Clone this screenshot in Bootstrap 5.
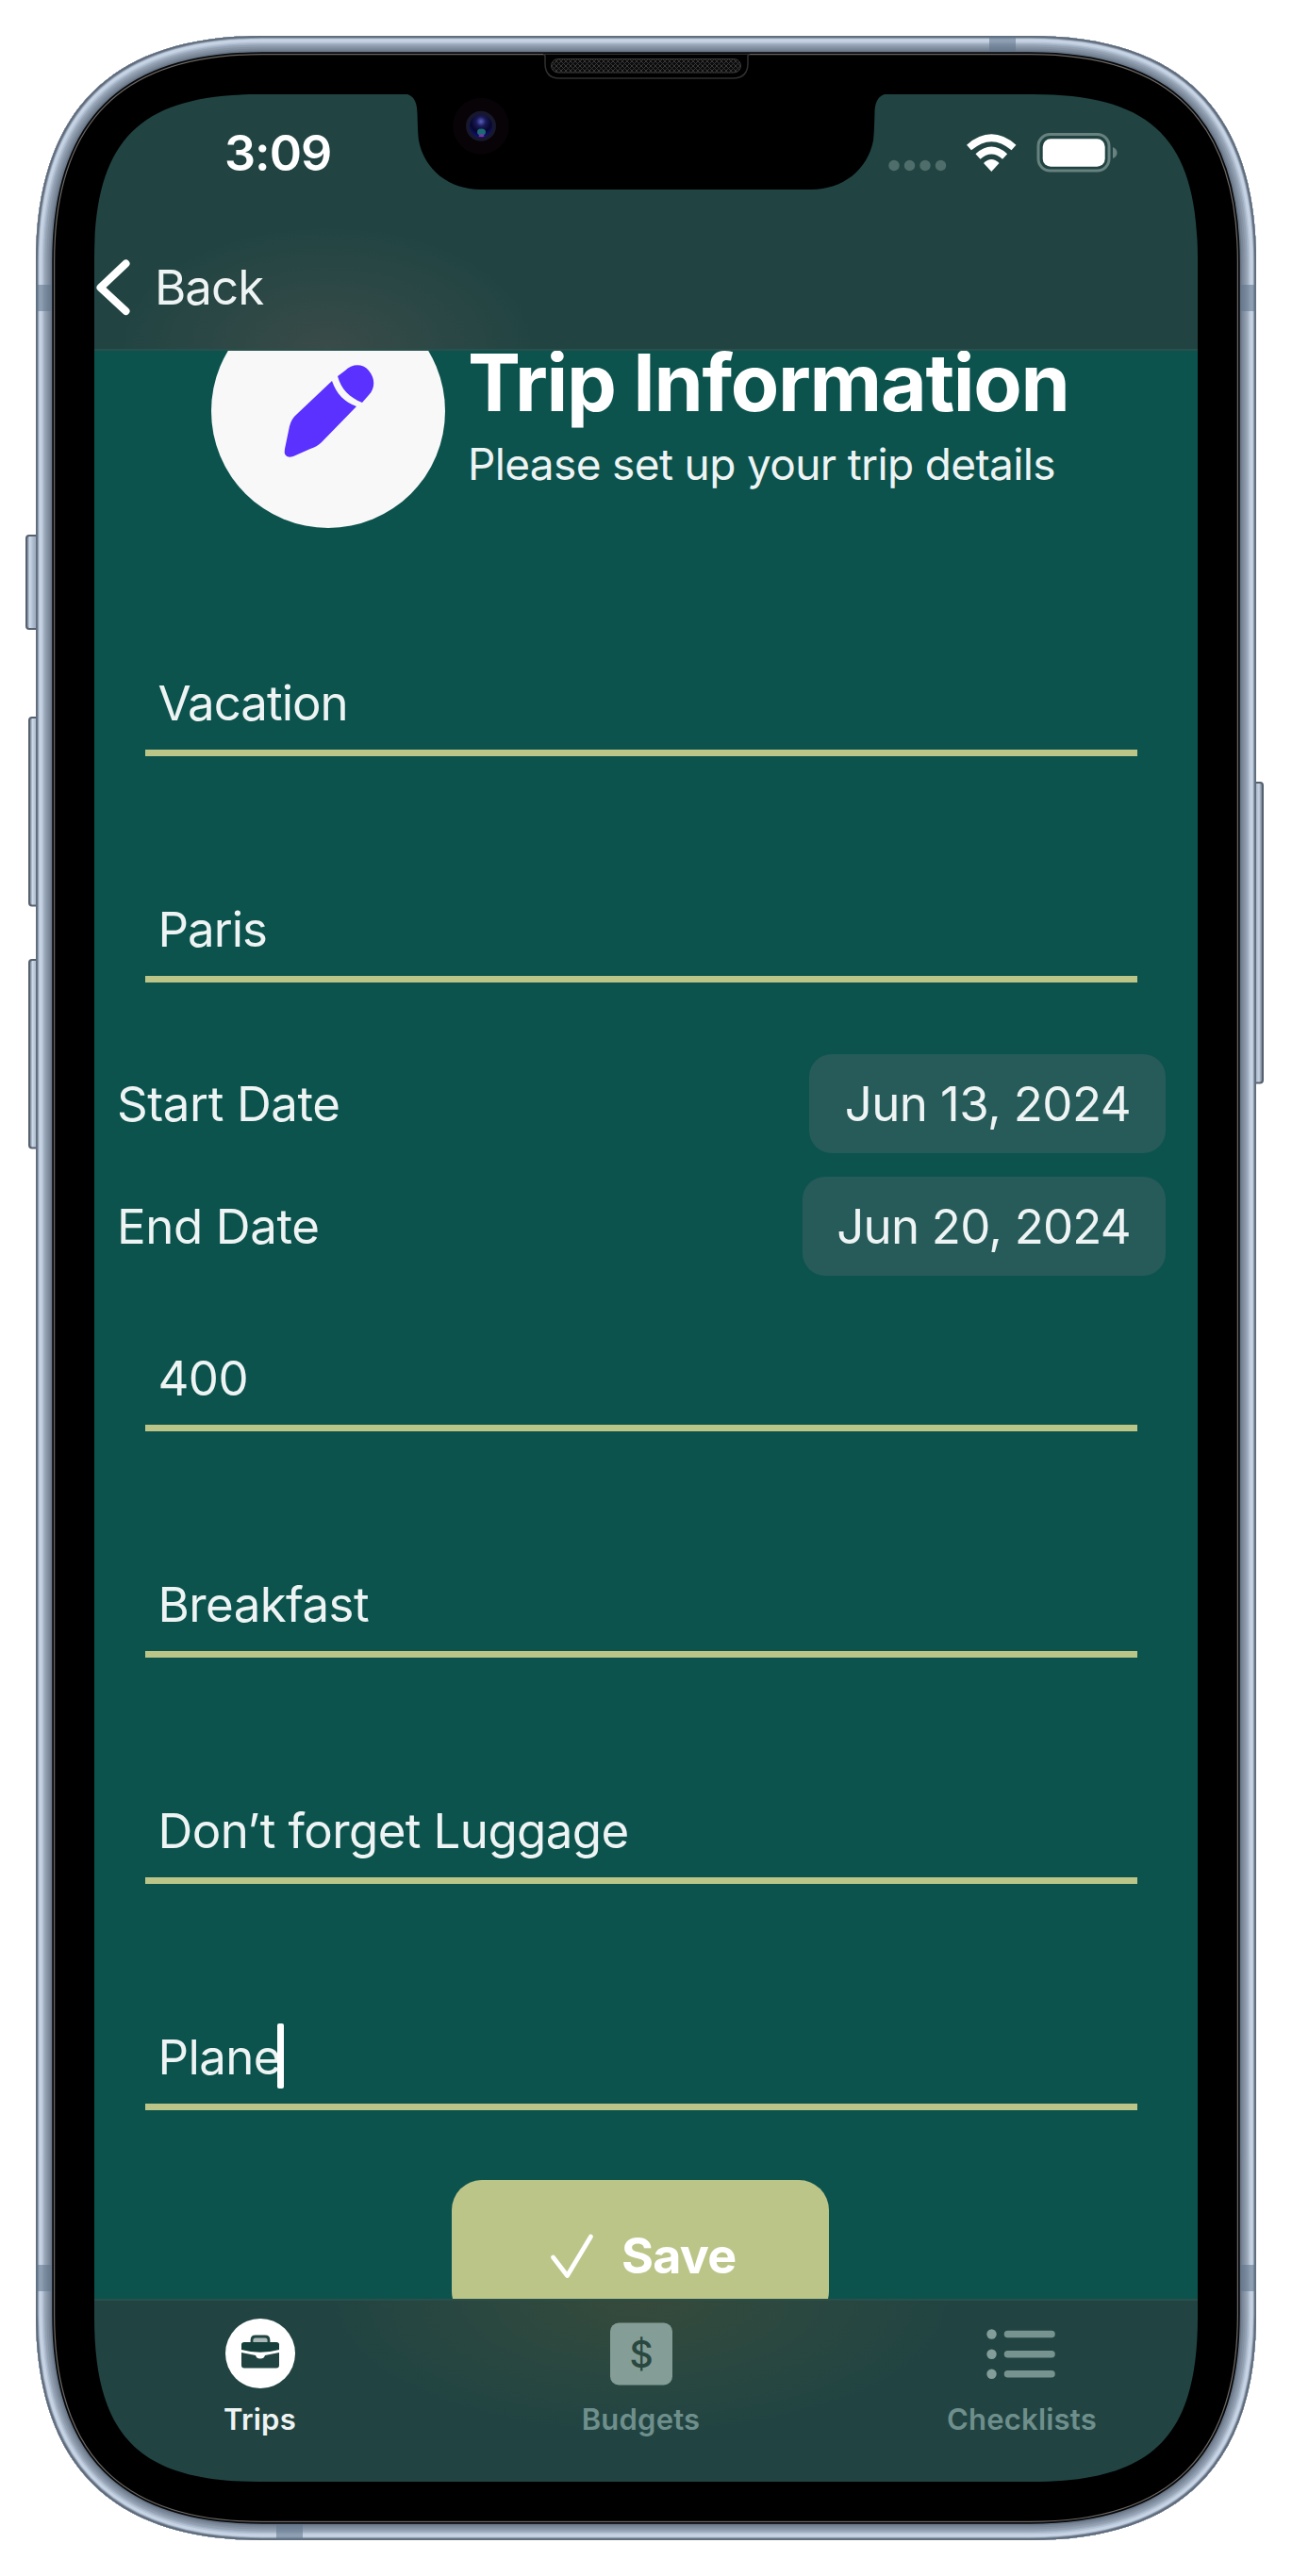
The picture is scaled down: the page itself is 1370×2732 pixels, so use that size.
<!DOCTYPE html>
<html lang="en">
<head>
<meta charset="utf-8">
<meta name="viewport" content="width=device-width, initial-scale=1">
<title>Trip Information</title>
<link href="https://cdn.jsdelivr.net/npm/bootstrap@5.3.0/dist/css/bootstrap.min.css" rel="stylesheet">
<script src="https://cdn.jsdelivr.net/npm/bootstrap@5.3.0/dist/js/bootstrap.bundle.min.js"></script>
<style>
  body { background: #fff; font-family: Inter, "Liberation Sans", sans-serif; color: #eef4f3; }
  .phone { width: 1370px; height: 2732px; padding: 100px; overflow: hidden; }
  .phone-shell { inset: 0; pointer-events: none; z-index: 5; }
  .app-screen { width: 1170px; height: 2532px; background: #0c534e; }
  .top-bar { height: 272px; background: radial-gradient(ellipse 220px 130px at 247px 100%, #3a4b48 0, #2e4846 45%, rgba(33,68,66,0) 100%), #214442; border-bottom: 2px solid #28504d; }
  .status-row { height: 125px; padding: 0 80px 0 138px; }
  .clock { font-size: 52px; line-height: 60px; font-weight: 600; color: #fff; padding-top: 33px; letter-spacing: -1px; }
  .status-icons { margin-top: 32px; }
  .back-row { height: 145px; padding: 50px 0 0 2px; }
  .label-text { font-size: 51px; line-height: 60px; letter-spacing: -.6px; }
  .back-label { margin-left: 24px; letter-spacing: -1px; }
  .trip-body { height: 2066px; }
  .trip-head { margin-top: -60px; padding-left: 124px; }
  .avatar { width: 248px; height: 248px; background: #f8f8f8; }
  .head-copy { padding: 44px 0 0 24px; }
  .head-title { font-size: 84px; line-height: 100px; font-weight: 700; color: #fff; letter-spacing: -1.3px; }
  .head-sub { font-size: 46px; line-height: 56px; margin-top: 8px; letter-spacing: -.65px; }
  .entry { height: 86px; margin: 0 64.500px 0 53.500px; padding-left: 14px; border-bottom: 7px solid #bcc588; }
  .entry + .entry { margin-top: 154px; }
  .first-group { margin-top: 156px; letter-spacing: -1px; }
  .date-group { margin-top: 76px; padding: 0 34px 0 24px; gap: 25px; letter-spacing: -.4px; }
  .second-group { margin-top: 79px; }
  .date-pill { height: 105px; width: 378px; padding-right: 37px; background: #265b5a; border-radius: 24px; letter-spacing: -.6px; }
  .date-pill.wide { width: 385px; letter-spacing: -.8px; }
  .caret { width: 7px; height: 69px; border-radius: 2px; background: #fff; margin: -6px 0 0 -4px; }
  .save-btn { width: 400px; height: 150px; margin: 74px 0 0 379px; background: #bcc588; border-radius: 32px; color: #fff; font-size: 52px; line-height: 60px; font-weight: 700; padding: 51px 0 0 104px; letter-spacing: -.8px; }
  .save-btn svg { margin-right: 26px; }
  .tab-strip { height: 194px; padding-right: 11px; background: radial-gradient(ellipse 330px 140px at 580px 0, #364a3b 0, #2b4840 50%, rgba(33,68,66,0) 100%), #214442; border-top: 2px solid #2b4f4a; }
  .tab-cell { width: 404px; padding-top: 16px; color: #6f8f8c; }
  .tab-name { font-size: 31px; line-height: 38px; font-weight: 600; margin-top: 11px; letter-spacing: .2px; }
  .tab-cell.current { color: #eef4f3; }
</style>
</head>
<body>
<div class="phone position-relative">
  <main class="app-screen d-flex flex-column">
    <header class="top-bar flex-shrink-0">
      <div class="status-row d-flex justify-content-between">
        <div class="clock">3:09</div>
        <svg class="status-icons" width="250" height="60" viewBox="0 0 250 60">
          <g fill="#4e6d6b"><circle cx="8" cy="43.500" r="5.700"/><circle cx="24.500" cy="43.500" r="5.700"/><circle cx="41" cy="43.500" r="5.700"/><circle cx="57.500" cy="43.500" r="5.700"/></g>
          <path d="M87.500 24.500Q111.300 4 135 24.500M97 34Q111.300 21 125.600 34" fill="none" stroke="#fff" stroke-width="7.500"/>
          <path d="M103 41Q111.300 33 119.500 41L111.300 50Z" fill="#fff"/>
          <rect x="161" y="10.500" width="75" height="38.500" rx="12.500" fill="none" stroke="#67827f" stroke-width="3"/>
          <rect x="165.700" y="15.300" width="66" height="29.400" rx="8.500" fill="#fff"/>
          <path d="M240 24Q244.500 26 244.500 30T240 36Z" fill="#67827f"/>
        </svg>
      </div>
      <div class="back-row d-flex">
        <svg width="38" height="60" viewBox="0 0 38 60"><path d="M31.500 4.500L4.500 30L31.500 55" fill="none" stroke="#fff" stroke-width="8" stroke-linecap="round" stroke-linejoin="round"/></svg>
        <span class="label-text back-label">Back</span>
      </div>
    </header>
    <section class="trip-body overflow-hidden flex-shrink-0">
      <div class="trip-head d-flex">
        <div class="avatar rounded-circle flex-shrink-0">
          <svg width="248" height="248" viewBox="0 0 248 248" fill="#5a31ff">
            <path d="M128 92C133 106 141 114 154 119L117 157Q112 162 105 164L87 172Q76 175 78 164L83 140Q85 132 91 127Z"/>
            <path d="M134 87L142 81C149 74 160 73 167 81C174 89 174 100 167 107L160 115C146 109 138 101 134 87Z"/>
          </svg>
        </div>
        <div class="head-copy text-nowrap">
          <div class="head-title">Trip Information</div>
          <div class="head-sub">Please set up your trip details</div>
        </div>
      </div>
      <div class="label-text"><div class="first-group">
        <div class="entry">Vacation</div>
        <div class="entry">Paris</div>
      </div></div>
      <div class="label-text"><div class="date-group d-flex flex-column">
        <div class="d-flex justify-content-between align-items-center"><span>Start Date</span><span class="date-pill d-flex align-items-center justify-content-end">Jun 13, 2024</span></div>
        <div class="d-flex justify-content-between align-items-center"><span>End Date</span><span class="date-pill wide d-flex align-items-center justify-content-end">Jun 20, 2024</span></div>
      </div></div>
      <div class="second-group label-text">
        <div class="entry">400</div>
        <div class="entry">Breakfast</div>
        <div class="entry">Don’t forget Luggage</div>
        <div class="entry d-flex">Plane<span class="caret"></span></div>
      </div>
      <div class="save-btn d-flex align-items-start">
        <svg width="50" height="60" viewBox="0 0 50 60"><path d="M3.500 31L18.500 50.500L43.500 9" fill="none" stroke="#fff" stroke-width="4.800" stroke-linecap="round" stroke-linejoin="round"/></svg>
        <span>Save</span>
      </div>
    </section>
    <nav class="tab-strip d-flex justify-content-center">
      <div class="tab-cell flex-shrink-0 text-center current">
        <svg class="d-block mx-auto" width="80" height="80" viewBox="0 0 80 80">
          <circle cx="40" cy="40" r="37" fill="#fff"/>
          <path d="M31 29V26Q31 22 35 22H45Q49 22 49 26V29" fill="#a9b9b7" stroke="#214442" stroke-width="2.800"/>
          <path d="M20 36V30.500Q20 28 23 28H57Q60 28 60 30.500V36Q40 41.500 20 36Z" fill="#163f3c"/>
          <path d="M20 39L35 42Q36 45.500 40 45.500T45 42L60 39V52.500Q60 55.500 57 55.500H23Q20 55.500 20 52.500Z" fill="#214442"/>
        </svg>
        <div class="tab-name">Trips</div>
      </div>
      <div class="tab-cell flex-shrink-0 text-center">
        <svg class="d-block mx-auto" width="80" height="80" viewBox="0 0 80 80">
          <rect x="7" y="7.500" width="66" height="66" rx="9" fill="#849d96"/>
          <text x="40" y="54.500" text-anchor="middle" font-family="Inter, sans-serif" font-size="39" font-weight="500" fill="#29483f">$</text>
        </svg>
        <div class="tab-name">Budgets</div>
      </div>
      <div class="tab-cell flex-shrink-0 text-center">
        <svg class="d-block mx-auto" width="80" height="80" viewBox="0 0 80 80">
          <g fill="#829d9a"><circle cx="7.500" cy="19.500" r="5.200"/><circle cx="7.500" cy="40.700" r="5.200"/><circle cx="7.500" cy="61.700" r="5.200"/></g>
          <path d="M24.500 19.500H71M24.500 40.700H71M24.500 61.700H71" stroke="#77938f" stroke-width="7.500" stroke-linecap="round"/>
        </svg>
        <div class="tab-name">Checklists</div>
      </div>
    </nav>
  </main>

  <!-- device body: buttons, metal band, bezel, notch -->
  <svg class="phone-shell position-absolute" width="1370" height="2732" viewBox="0 0 1370 2732">
    <defs>
      <path id="body" d="M38 278C38 118 118 38 278 38H1092C1252 38 1332 118 1332 278V2454C1332 2614 1252 2694 1092 2694H278C118 2694 38 2614 38 2454Z"/>
      <clipPath id="bodyClip"><use href="#body"/></clipPath>
      <linearGradient id="btnL" x1="0" x2="1" y1="0" y2="0"><stop offset="0" stop-color="#5d6979"/><stop offset=".22" stop-color="#cbd8e8"/><stop offset=".5" stop-color="#a6b4c7"/><stop offset="1" stop-color="#8c9aae"/></linearGradient>
      <linearGradient id="btnR" x1="1" x2="0" y1="0" y2="0"><stop offset="0" stop-color="#5d6979"/><stop offset=".25" stop-color="#c6d3e4"/><stop offset=".6" stop-color="#94a2b6"/><stop offset="1" stop-color="#8492a5"/></linearGradient>
      <pattern id="mesh" width="5" height="5" patternUnits="userSpaceOnUse"><rect width="5" height="5" fill="#0b0b0b"/><path d="M0 0L5 5M5 0L0 5" stroke="#3c3c3c" stroke-width=".9"/></pattern>
      <radialGradient id="lens" cx=".5" cy=".3" r=".7"><stop offset="0" stop-color="#5a60c0"/><stop offset=".3" stop-color="#1a1a58"/><stop offset=".65" stop-color="#06062c"/><stop offset="1" stop-color="#10127a"/></radialGradient>
    </defs>
    <g stroke="#56616f" stroke-width="2">
      <rect x="28" y="568" width="16" height="99" rx="3" fill="url(#btnL)"/>
      <rect x="31" y="761" width="16" height="199.500" rx="3" fill="url(#btnL)"/>
      <rect x="31" y="1018" width="16" height="199.500" rx="3" fill="url(#btnL)"/>
      <rect x="1323" y="830" width="16" height="318.500" rx="3" fill="url(#btnR)"/>
    </g>
    <path fill-rule="evenodd" d="M38 278C38 118 118 38 278 38H1092C1252 38 1332 118 1332 278V2454C1332 2614 1252 2694 1092 2694H278C118 2694 38 2614 38 2454ZM100 275V2457C100 2584 148 2632 275 2632H1095C1222 2632 1270 2584 1270 2457V275C1270 148 1222 100 1095 100H275C148 100 100 148 100 275Z" fill="#000"/>
    <g clip-path="url(#bodyClip)" fill="none">
      <use href="#body" stroke="#6b6561" stroke-width="40.500"/>
      <use href="#body" stroke="#06090c" stroke-width="38"/>
      <use href="#body" stroke="#6a7787" stroke-width="34.500"/>
      <use href="#body" stroke="#7a8798" stroke-width="31"/>
      <use href="#body" stroke="#8593a5" stroke-width="27"/>
      <use href="#body" stroke="#92a0b2" stroke-width="23"/>
      <use href="#body" stroke="#a2b0c3" stroke-width="19"/>
      <use href="#body" stroke="#b4c2d4" stroke-width="16"/>
      <use href="#body" stroke="#c6d3e4" stroke-width="13"/>
      <use href="#body" stroke="#b3c1d3" stroke-width="7"/>
      <use href="#body" stroke="#8391a3" stroke-width="5.500"/>
      <use href="#body" stroke="#5f6b7a" stroke-width="3.500"/>
      <g fill="#60758a" fill-opacity=".55">
        <rect x="38" y="302" width="17" height="28"/><rect x="1315" y="302" width="17" height="28"/>
        <rect x="38" y="2402" width="17" height="28"/><rect x="1315" y="2402" width="17" height="28"/>
        <rect x="1049" y="38" width="28" height="17"/><rect x="293" y="2677" width="28" height="17"/>
      </g>
    </g>
    <path d="M424 99C438 99 442 106 442.500 120C443 135 443 140 444 149C450 180 476 201 510 201H860C894 201 920 180 926 149C927 140 927 135 927.500 120C928 106 932 99 946 99Z" fill="#000"/>
    <path d="M576 57.500Q578 57.500 578 60V67Q578 83 593 83H777Q793 83 793 67V60Q793 57.500 795 57.500" fill="#000" stroke="#303030" stroke-width="1.500"/>
    <rect x="584.500" y="62.500" width="201" height="14.500" rx="7.250" fill="url(#mesh)" stroke="#3a3a3a"/>
    <circle cx="510" cy="133.700" r="30" fill="#070306"/>
    <circle cx="510" cy="133.700" r="16" fill="#17182d"/>
    <circle cx="510" cy="133.700" r="12" fill="url(#lens)"/>
    <ellipse cx="510.500" cy="140" rx="4.500" ry="3.500" fill="#1d6a74"/>
    <ellipse cx="510.500" cy="144" rx="3" ry="1.300" fill="#8a2ab0"/>
  </svg>
</div>
</body>
</html>
